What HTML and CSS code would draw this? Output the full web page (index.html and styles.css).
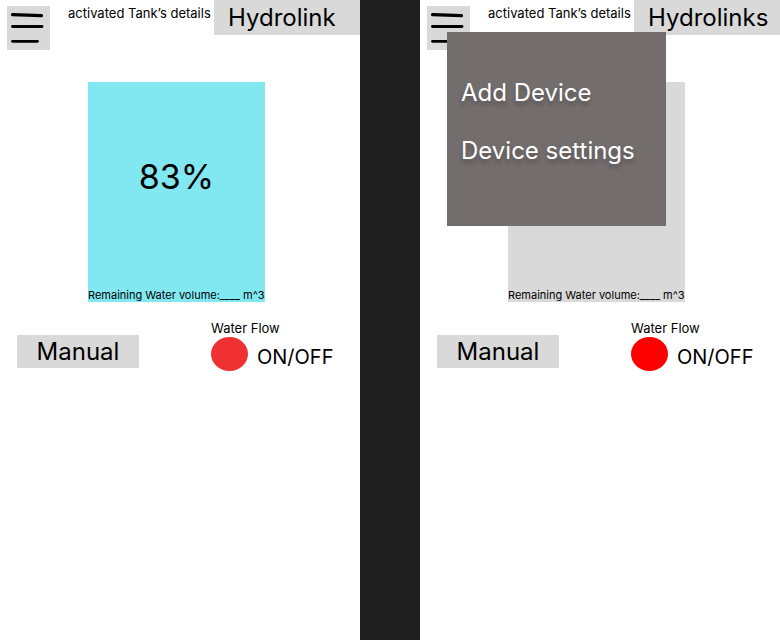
FILE: index.html
```html
<!DOCTYPE html>
<html>
<head>
<meta charset="utf-8">
<link rel="stylesheet" href="styles.css">
</head>
<body>
<div class="screen">
  <section class="panel">
    <header class="top">
      <div class="burger">
        <svg width="43" height="44" viewBox="0 0 43 44">
          <path d="M5.5 8.6 L34.5 9.6" stroke="#000" stroke-width="3.2" stroke-linecap="round"/>
          <path d="M5.5 20.5 L35 20.5" stroke="#000" stroke-width="2.8" stroke-linecap="round"/>
          <path d="M5.5 35.3 L30.5 35.3" stroke="#000" stroke-width="2.8" stroke-linecap="round"/>
        </svg>
      </div>
      <div class="subtitle">activated Tank’s details</div>
      <div class="brand">Hydrolink</div>
    </header>
    <div class="tank tank-full">
      <div class="percent">83%</div>
      <div class="remaining">Remaining Water volume:____ m^3</div>
    </div>
    <div class="controls">
      <div class="manual">Manual</div>
      <div class="flow">
        <div class="flow-label">Water Flow</div>
        <div class="flow-row">
          <span class="dot dot-a"></span>
          <span class="onoff">ON/OFF</span>
        </div>
      </div>
    </div>
  </section>
  <div class="divider"></div>
  <section class="panel">
    <header class="top">
      <div class="burger">
        <svg width="43" height="44" viewBox="0 0 43 44">
          <path d="M5.5 8.6 L34.5 9.6" stroke="#000" stroke-width="3.2" stroke-linecap="round"/>
          <path d="M5.5 20.5 L35 20.5" stroke="#000" stroke-width="2.8" stroke-linecap="round"/>
          <path d="M5.5 35.3 L30.5 35.3" stroke="#000" stroke-width="2.8" stroke-linecap="round"/>
        </svg>
      </div>
      <div class="subtitle">activated Tank’s details</div>
      <div class="brand">Hydrolinks</div>
    </header>
    <div class="tank tank-empty">
      <div class="percent"></div>
      <div class="remaining">Remaining Water volume:____ m^3</div>
    </div>
    <div class="controls">
      <div class="manual">Manual</div>
      <div class="flow">
        <div class="flow-label">Water Flow</div>
        <div class="flow-row">
          <span class="dot dot-b"></span>
          <span class="onoff">ON/OFF</span>
        </div>
      </div>
    </div>
    <nav class="menu">
      <div class="menu-item">Add Device</div>
      <div class="menu-item menu-item-2">Device settings</div>
    </nav>
  </section>
</div>
</body>
</html>
```
FILE: styles.css
```css
html, body {
  margin: 0;
  padding: 0;
  background: #ffffff;
}
body {
  font-family: Inter, "Noto Sans", sans-serif;
  color: #000;
}
.screen {
  display: flex;
  width: 780px;
  height: 640px;
}
.panel {
  position: relative;
  width: 360px;
  height: 640px;
  background: #ffffff;
  overflow: hidden;
}
.divider {
  width: 60px;
  height: 640px;
  background: #1e1e1e;
}
.top {
  display: flex;
  align-items: flex-start;
  height: 50px;
}
.burger {
  margin-left: 7px;
  margin-top: 6px;
  width: 43px;
  height: 44px;
  background: #d9d9d9;
}
.burger svg {
  display: block;
}
.subtitle {
  margin-left: 18px;
  margin-top: 5px;
  font-size: 13px;
  line-height: 16px;
  white-space: nowrap;
  width: 146px;
}
.brand {
  margin-left: auto;
  width: 132px;
  height: 35px;
  padding-left: 14px;
  background: #d9d9d9;
  font-size: 24px;
  line-height: 35px;
}
.tank {
  margin-left: 88px;
  margin-top: 32px;
  width: 177px;
  height: 220px;
  display: flex;
  flex-direction: column;
}
.tank-full {
  background: #81e8f2;
}
.tank-empty {
  background: #d9d9d9;
}
.percent {
  margin-top: 74px;
  height: 41px;
  font-size: 34px;
  line-height: 41px;
  text-align: center;
}
.remaining {
  margin-top: auto;
  font-size: 11px;
  line-height: 13px;
  padding-bottom: 0;
  white-space: nowrap;
}
.controls {
  display: flex;
  align-items: flex-start;
  margin-top: 19px;
}
.manual {
  margin-left: 17px;
  margin-top: 14px;
  width: 122px;
  height: 33px;
  background: #d9d9d9;
  font-size: 24px;
  line-height: 33px;
  text-align: center;
}
.flow {
  margin-left: 72px;
}
.flow-label {
  font-size: 13px;
  line-height: 14px;
}
.flow-row {
  display: flex;
  align-items: flex-start;
  margin-top: 2px;
}
.dot {
  display: block;
  width: 37px;
  height: 34px;
  border-radius: 50%;
}
.dot-a {
  background: #f03131;
}
.dot-b {
  background: #ff0000;
}
.onoff {
  margin-left: 9px;
  margin-top: 8px;
  font-size: 20px;
  line-height: 24px;
}
.menu {
  position: absolute;
  left: 27px;
  top: 32px;
  width: 219px;
  height: 194px;
  background: #736e6d;
  padding-top: 46px;
  box-sizing: border-box;
}
.menu-item {
  padding-left: 14px;
  font-size: 24px;
  line-height: 29px;
  color: #ffffff;
  text-shadow: 0 4px 4px rgba(0, 0, 0, 0.25);
  white-space: nowrap;
}
.menu-item-2 {
  margin-top: 29px;
}
```
